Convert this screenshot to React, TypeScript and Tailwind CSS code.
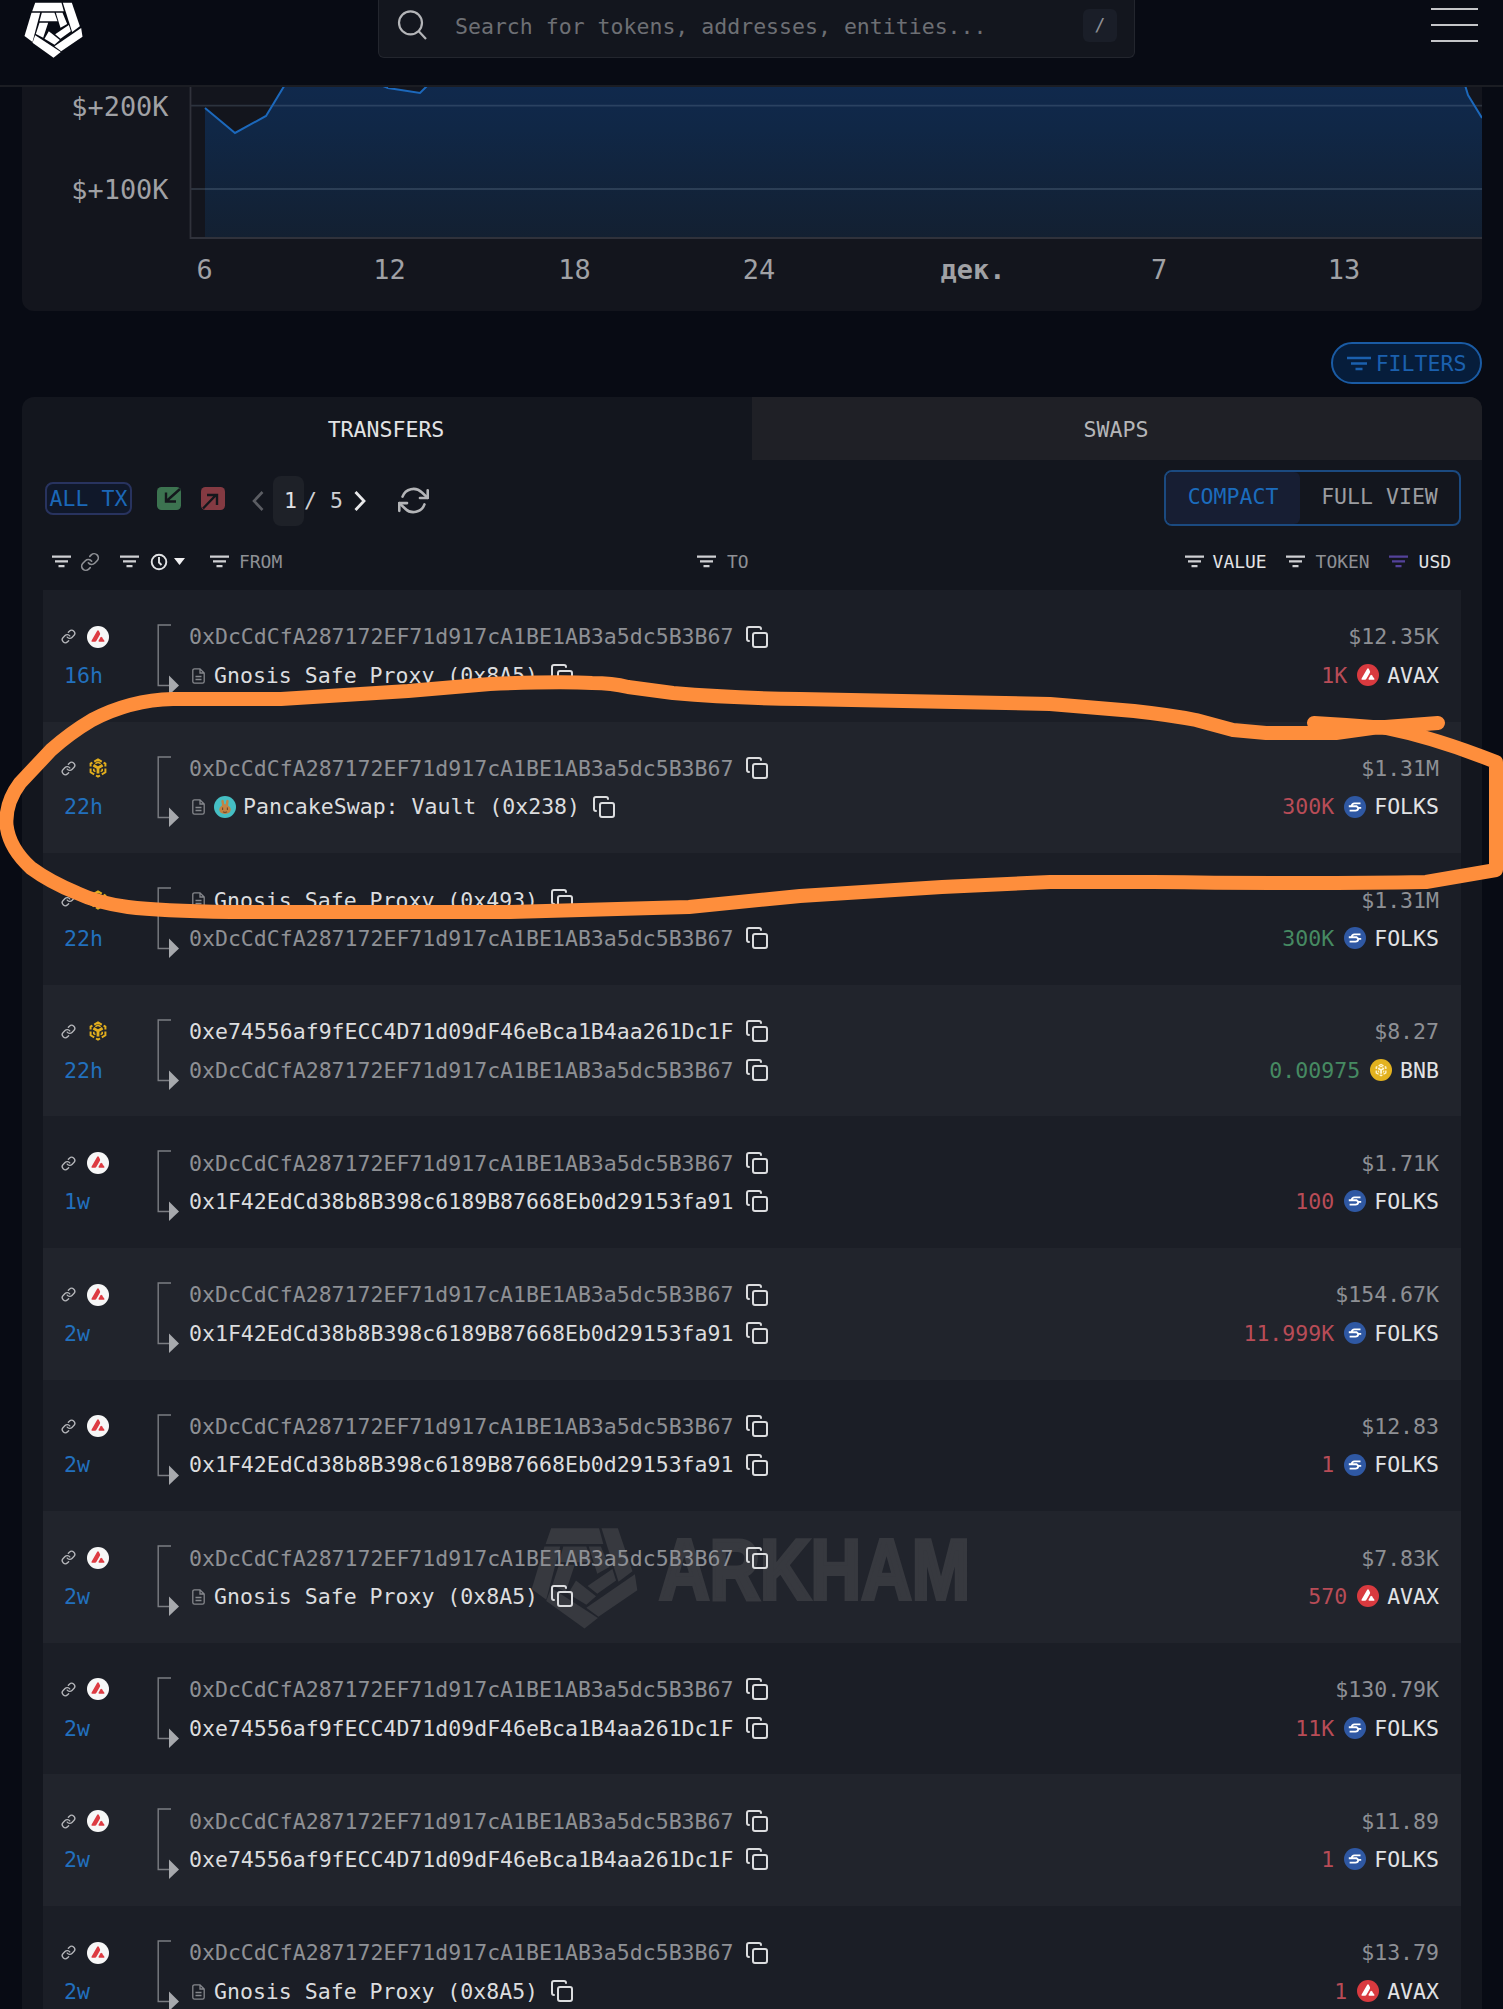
import React, { useState } from "react";
import { Copy, Link } from "lucide-react";
import { FiRefreshCw } from "react-icons/fi";

type Party = { name: string; muted?: boolean; contract?: boolean; pancake?: boolean };
type Transfer = {
  chain: "avax" | "bsc";
  age: string;
  from: Party;
  to: Party;
  usd: string;
  amount: string;
  incoming?: boolean;
  token: "AVAX" | "FOLKS" | "BNB";
};

const main: Party = { name: "0xDcCdCfA287172EF71d917cA1BE1AB3a5dc5B3B67", muted: true };
const walletE: Party = { name: "0xe74556af9fECC4D71d09dF46eBca1B4aa261Dc1F" };
const walletF: Party = { name: "0x1F42EdCd38b8B398c6189B87668Eb0d29153fa91" };
const safe: Party = { name: "Gnosis Safe Proxy (0x8A5)", contract: true };
const safeBsc: Party = { name: "Gnosis Safe Proxy (0x493)", contract: true };
const vault: Party = { name: "PancakeSwap: Vault (0x238)", contract: true, pancake: true };

const transfers: Transfer[] = [
  { chain: "avax", age: "16h", from: main, to: safe, usd: "$12.35K", amount: "1K", token: "AVAX" },
  { chain: "bsc", age: "22h", from: main, to: vault, usd: "$1.31M", amount: "300K", token: "FOLKS" },
  { chain: "bsc", age: "22h", from: safeBsc, to: main, usd: "$1.31M", amount: "300K", incoming: true, token: "FOLKS" },
  { chain: "bsc", age: "22h", from: walletE, to: main, usd: "$8.27", amount: "0.00975", incoming: true, token: "BNB" },
  { chain: "avax", age: "1w", from: main, to: walletF, usd: "$1.71K", amount: "100", token: "FOLKS" },
  { chain: "avax", age: "2w", from: main, to: walletF, usd: "$154.67K", amount: "11.999K", token: "FOLKS" },
  { chain: "avax", age: "2w", from: main, to: walletF, usd: "$12.83", amount: "1", token: "FOLKS" },
  { chain: "avax", age: "2w", from: main, to: safe, usd: "$7.83K", amount: "570", token: "AVAX" },
  { chain: "avax", age: "2w", from: main, to: walletE, usd: "$130.79K", amount: "11K", token: "FOLKS" },
  { chain: "avax", age: "2w", from: main, to: walletE, usd: "$11.89", amount: "1", token: "FOLKS" },
  { chain: "avax", age: "2w", from: main, to: safe, usd: "$13.79", amount: "1", token: "AVAX" },
];

function Logo({ className }: { className: string }) {
  return (
    <svg viewBox="72 8 176 168" className={className} fill="currentColor">
      <path d="M105 10H184L191 36H96Z" />
      <path d="M188 10H215L239 81L216 98Z" />
      <path d="M243 86L247 112L183 156L163 141Z" />
      <path d="M105 108L182 158L160 175L97 130Z" />
      <path d="M94 40H120L97 128L73 110Z" />
      <path d="M125 40H163L172 66H118Z" />
      <path d="M167 40H187L201 74L181 85Z" />
      <path d="M206 77L212 96L181 118L165 105Z" />
      <path d="M146 96L179 122L163 136L133 118Z" />
      <path d="M118 70H144L129 115L107 104Z" />
    </svg>
  );
}

function FilterIcon({ className = "text-[#cfd0d3]" }: { className?: string }) {
  return (
    <svg viewBox="0 0 19 13" className={`h-[13px] w-[19px] shrink-0 ${className}`} stroke="currentColor" strokeWidth="2.2">
      <path d="M0 1.6H19M3 6.4H16M6.5 11.2H12.5" />
    </svg>
  );
}

function AvaxMark({ bg, fg }: { bg: string; fg: string }) {
  return (
    <svg viewBox="0 0 22 22" className="h-[22px] w-[22px] shrink-0">
      <circle cx="11" cy="11" r="11" fill={bg} />
      <path d="M10.2 4.8Q11 3.6 11.8 4.8L13 7.2Q13.3 8 12.9 8.8L9.3 15Q8.9 15.7 8 15.7H5.2Q4 15.5 4.6 14.4Z" fill={fg} />
      <path d="M13.6 11.2Q14.2 10.4 14.9 11.2L17.4 14.7Q17.8 15.6 16.8 15.7H12.2Q11.1 15.6 11.6 14.6Z" fill={fg} />
    </svg>
  );
}

function BnbMark({ color }: { color: string }) {
  return (
    <g fill="none" stroke={color} strokeWidth="2">
      <path d="M7.2 4.6L11 2.5L14.8 4.6M3.6 9.5V6.7L5.4 5.7M18.4 9.5V6.7L16.6 5.7M3.6 11.5V15.3L7.2 17.4M18.4 11.5V15.3L14.8 17.4M9 18.5L11 19.7L13 18.5" />
      <path d="M6.4 8.3L11 11L15.6 8.3M11 10.5V16.6" strokeWidth="2.8" />
      <path d="M8.3 6.6L11 5.2L13.7 6.6M6.8 11.8V13.6L8.4 14.6M15.2 11.8V13.6L13.6 14.6" strokeWidth="1.6" />
    </g>
  );
}

function ChainIcon({ chain }: { chain: Transfer["chain"] }) {
  if (chain === "avax") return <AvaxMark bg="#f7f7f7" fg="#dd3b42" />;
  return (
    <svg viewBox="0 0 22 22" className="h-[22px] w-[22px] shrink-0">
      <BnbMark color="#e2ae1d" />
    </svg>
  );
}

function TokenIcon({ token }: { token: Transfer["token"] }) {
  if (token === "AVAX") return <AvaxMark bg="#d93a3f" fg="#ffffff" />;
  if (token === "BNB")
    return (
      <svg viewBox="0 0 22 22" className="h-[22px] w-[22px] shrink-0">
        <circle cx="11" cy="11" r="11" fill="#e3b21f" />
        <g transform="translate(3.9 3.9) scale(0.65)">
          <BnbMark color="#fff6d4" />
        </g>
      </svg>
    );
  return (
    <svg viewBox="0 0 22 22" className="h-[22px] w-[22px] shrink-0">
      <circle cx="11" cy="11" r="11" fill="#2f58a3" />
      <path d="M16.5 7.4H10.5Q8 7.4 7.6 10.1M5.6 14.6H11.5Q14 14.6 14.4 11.900" fill="none" stroke="#fff" strokeWidth="1.9" />
      <path d="M4.800 10.200H12.500L14.500 11.900H17.200" fill="none" stroke="#fff" strokeWidth="1.9" />
    </svg>
  );
}

function PancakeIcon() {
  return (
    <svg viewBox="0 0 22 22" className="mr-[7px] h-[22px] w-[22px] shrink-0">
      <circle cx="11" cy="11" r="11" fill="#45bfc4" />
      <path d="M8 9.5L7.3 5Q8.6 2.6 9.8 5L10.3 8.3H11.7L12.2 5Q13.4 2.6 14.7 5L14 9.5Q16.8 11 16.8 13.6Q16.6 17.8 11 17.9Q5.4 17.8 5.2 13.6Q5.2 11 8 9.5Z" fill="#c28444" />
      <path d="M8.6 11.6V14M13.4 11.6V14M9 15.8Q11 17 13 15.8" stroke="#70492c" strokeWidth="1.1" fill="none" />
    </svg>
  );
}

function PartyLine({ party }: { party: Party }) {
  return (
    <div className="flex h-[38.4px] items-center">
      {party.contract && (
        <svg viewBox="0 0 13 16" className="mr-[9px] ml-[3px] h-4 w-[13px] shrink-0" fill="none" stroke="#85878c" strokeWidth="1.3">
          <path d="M8 .8H2.6Q.8.8.8 2.6V13.4Q.8 15.2 2.6 15.2H10.4Q12.2 15.2 12.2 13.4V5ZM8 .8V5H12.2M3.5 8.5H9.5M3.5 11.5H9.5" />
        </svg>
      )}
      {party.pancake && <PancakeIcon />}
      <span className={party.muted ? "text-[#8e9095]" : "text-[#dcdddf]"}>{party.name}</span>
      <Copy className="mb-px ml-3 h-6 w-6 shrink-0 text-[#dcdddf]" strokeWidth={2} />
    </div>
  );
}

function TransferRow({ tx, striped }: { tx: Transfer; striped: boolean }) {
  return (
    <div className={`h-[131.6px] pr-[22px] pl-[18px] ${striped ? "bg-[#21242c]" : "bg-[#1b1e26]"}`}>
      <div className="relative z-10 flex pt-[28px]">
        <div className="w-[96px]">
          <div className="flex h-[38.4px] items-center pb-px">
            <Link className="h-[15px] w-[15px] text-[#b5b6ba]" strokeWidth={2.2} />
            <div className="ml-[11px]">
              <ChainIcon chain={tx.chain} />
            </div>
          </div>
          <div className="flex h-[38.4px] items-center pl-[3px] text-[#2270bd]">{tx.age}</div>
        </div>
        <svg viewBox="0 0 22 72" className="mt-[6px] h-[72px] w-[22px] shrink-0">
          <path d="M14 1H1.2V61.5H12" fill="none" stroke="#7b7d82" strokeWidth="1.4" />
          <path d="M12 51.5L22 61.5L12 71Z" fill="#a7a9ad" />
        </svg>
        <div className="ml-[10px] flex-1">
          <PartyLine party={tx.from} />
          <PartyLine party={tx.to} />
        </div>
        <div className="text-right">
          <div className="flex h-[38.4px] items-center justify-end text-[#8e9095]">{tx.usd}</div>
          <div className="flex h-[38.4px] items-center justify-end">
            <span className={tx.incoming ? "text-[#468a62]" : "text-[#b84c57]"}>{tx.amount}</span>
            <span className="mr-[8px] mb-px ml-[10px]">
              <TokenIcon token={tx.token} />
            </span>
            <span className="text-[#e2e3e5]">{tx.token}</span>
          </div>
        </div>
      </div>
    </div>
  );
}

function Chart() {
  const line = "M205 21L235 46L266 29L286 -4L300 -20H360L378 -3L388 1L420 6L430 -4L450 -30H1450L1465 -2L1468 8L1482 31";
  return (
    <svg viewBox="22 0 1460 225" className="h-[225px] w-[1460px]">
      <defs>
        <linearGradient id="area" x1="0" y1="0" x2="0" y2="1">
          <stop offset="0" stopColor="#102a50" />
          <stop offset="0.4" stopColor="#102746" />
          <stop offset="1" stopColor="#132031" />
        </linearGradient>
      </defs>
      <clipPath id="plot">
        <path d="M22 0H1482V152H22Z" />
      </clipPath>
      <g clipPath="url(#plot)">
        <path d={`${line}V152H205Z`} fill="url(#area)" />
        <path d="M191 18.7H1482M191 102H1482" stroke="#8aa0b8" strokeOpacity="0.22" strokeWidth="1.8" />
        <path d={line} fill="none" stroke="#1c68bb" strokeWidth="2" />
      </g>
      <path d="M190.5 0V151H1482" fill="none" stroke="#30323b" strokeWidth="1.8" />
      <g fill="#a0a1a5" fontSize="26.9">
        <text x="168.5" y="28.5" textAnchor="end">$+200K</text>
        <text x="168.5" y="111.5" textAnchor="end">$+100K</text>
        <g textAnchor="middle">
          <text x="204.5" y="191.5">6</text>
          <text x="389.5" y="191.5">12</text>
          <text x="574.5" y="191.5">18</text>
          <text x="759" y="191.5">24</text>
          <text x="973" y="191.5" fontWeight="bold">дек.</text>
          <text x="1159" y="191.5">7</text>
          <text x="1344" y="191.5">13</text>
        </g>
      </g>
    </svg>
  );
}

export default function App() {
  const [page, setPage] = useState<number>(1);
  const totalPage = 5;

  return (
    <div className="relative h-[2009px] w-[1503px] overflow-hidden bg-[#080b14] font-['DejaVu_Sans_Mono',monospace] text-[21.54px] leading-none">
      <header className="flex h-[87px] items-start border-b-2 border-[#1b1d23] pr-[25px] pl-6">
        <Logo className="mt-[2px] h-[56px] w-[59px] text-white" />
        <div className="ml-[295px] flex h-[58px] w-[757px] items-center rounded-b-md border border-t-0 border-[#23262e] bg-[#13161e] pr-[17px] pb-[7px] pl-[18px]">
          <svg viewBox="0 0 30 30" className="h-[30px] w-[30px]" fill="none" stroke="#b4b5b8" strokeWidth="2.2">
            <circle cx="13.5" cy="12.8" r="11.5" />
            <path d="M21.5 21L29 29" />
          </svg>
          <span className="mt-[3px] ml-[28px] flex-1 text-[#6d6f74]">Search for tokens, addresses, entities...</span>
          <span className="flex h-[33px] w-[34px] items-center justify-center rounded-md bg-[#1a1e28] text-[18px] text-[#8e9095]">/</span>
        </div>
        <div className="mt-[8px] ml-auto flex w-[47px] flex-col gap-[13.8px]">
          <div className="h-[2px] bg-[#c4c5c8]" />
          <div className="h-[2px] bg-[#c4c5c8]" />
          <div className="h-[2px] bg-[#c4c5c8]" />
        </div>
      </header>

      <section className="mx-[22px] h-[224px] w-[1460px] overflow-hidden rounded-b-xl bg-[#13151d]">
        <Chart />
      </section>

      <div className="flex h-[86px] justify-end pt-[31px] pr-[21px]">
        <button className="flex h-[42px] w-[151px] items-center justify-center rounded-full border-2 border-[#1a5ba4] bg-[#061d3b] text-[#1b60ae]">
          <svg viewBox="0 0 24 15" className="mr-[5px] h-[15px] w-6" stroke="currentColor" strokeWidth="2.4">
            <path d="M0 2H24M4 7.5H20M8.5 13H15.5" />
          </svg>
          <span className="mt-[2px]">FILTERS</span>
        </button>
      </div>

      <section className="mx-[22px] w-[1460px] overflow-hidden rounded-t-xl bg-[#13161e]">
        <div className="flex h-[63px]">
          <div className="flex flex-1 items-center justify-center pt-[2px] pr-[2px] text-[#e2e3e5]">TRANSFERS</div>
          <div className="flex flex-1 items-center justify-center bg-[#1f2026] pt-[2px] pr-[2px] text-[#b4b5b8]">SWAPS</div>
        </div>

        <div className="flex h-[76px] items-center pr-[21px] pl-[23px]">
          <div className="flex h-[33px] w-[87px] items-center justify-center rounded-lg border-2 border-[#28335f] bg-[#10182a] text-[#1b68b8]">
            <span className="mt-px whitespace-nowrap">ALL TX</span>
          </div>
          <svg viewBox="0 0 24 23" className="ml-[25px] h-[23px] w-6">
            <rect width="24" height="23" rx="4.5" fill="#3c7350" />
            <path d="M23 2L9 14.5M9 5.5V14.5H19" fill="none" stroke="#14171c" strokeWidth="2.4" />
          </svg>
          <svg viewBox="0 0 24 23" className="ml-5 h-[23px] w-6">
            <rect width="24" height="23" rx="4.5" fill="#843a42" />
            <path d="M2 21.5L15.5 7.5M6 8H16V18" fill="none" stroke="#14171c" strokeWidth="2.4" />
          </svg>
          <button disabled={page === 1} onClick={() => setPage((prev) => prev - 1)} className="ml-[27px]">
            <svg viewBox="0 0 12 20" className="mt-[5px] h-5 w-3" fill="none" stroke="#5b5d63" strokeWidth="2.6">
              <path d="M10.5 1L2 10L10.5 19" />
            </svg>
          </button>
          <span className="mt-[5px] ml-[9px] flex h-[50px] w-[31px] items-center justify-center rounded-lg bg-[#1e2128] pl-[4px] text-[#e2e3e5]">{page}</span>
          <span className="mt-[6px] text-[#cfd0d3]">/</span>
          <span className="mt-[6px] ml-[13px] text-[#cfd0d3]">{totalPage}</span>
          <button disabled={page === totalPage} onClick={() => setPage((prev) => prev + 1)} className="ml-[11px]">
            <svg viewBox="0 0 12 20" className="mt-[5px] h-5 w-3" fill="none" stroke="#e8e8ea" strokeWidth="2.8">
              <path d="M1.5 1L10 10L1.5 19" />
            </svg>
          </button>
          <FiRefreshCw className="mt-[5px] ml-[32px] h-[31px] w-[31px] text-[#b4b5b8]" />
          <div className="ml-auto flex h-[56px] w-[297px] overflow-hidden rounded-lg border-2 border-[#1b4a80]">
            <div className="flex w-[134px] items-center justify-center rounded-r-md bg-[#171e33] pb-[2px] text-[#1b6cbd]">COMPACT</div>
            <div className="flex flex-1 items-center justify-center pb-[2px] text-[#9b9da1]">FULL VIEW</div>
          </div>
        </div>

        <div className="flex h-[54px] items-center pr-[31px] pb-[3px] pl-[30px] text-[17.95px] text-[#8e9095]">
          <FilterIcon />
          <Link className="ml-[9px] h-5 w-5" strokeWidth={2} />
          <FilterIcon className="ml-[20px] text-[#cfd0d3]" />
          <svg viewBox="0 0 18 18" className="ml-[11px] h-[18px] w-[18px]" fill="none" stroke="#e2e3e5" strokeWidth="1.9">
            <circle cx="9" cy="9" r="7.3" />
            <path d="M9 4V9.5L11.5 12" />
          </svg>
          <svg viewBox="0 0 11 7" className="ml-[6px] h-[7px] w-[11px]" fill="#f0f0f2">
            <path d="M0 0H11L5.5 7Z" />
          </svg>
          <FilterIcon className="ml-[25px] text-[#cfd0d3]" />
          <span className="ml-[10px] w-[458px]">FROM</span>
          <FilterIcon />
          <span className="ml-[11px]">TO</span>
          <FilterIcon className="ml-auto text-[#cfd0d3]" />
          <span className="ml-[9px] text-[#e2e3e5]">VALUE</span>
          <FilterIcon className="ml-[19px] text-[#cfd0d3]" />
          <span className="ml-[11px]">TOKEN</span>
          <FilterIcon className="ml-[19px] text-[#54429a]" />
          <span className="ml-[11px] text-[#e2e3e5]">USD</span>
        </div>

        <div className="relative mx-[21px]">
          {transfers.map((tx, index) => (
            <TransferRow key={index} tx={tx} striped={index % 2 === 1} />
          ))}
          <div className="absolute top-[937px] left-[488px] flex text-[#37393f]">
            <Logo className="h-[102px] w-[107px]" />
            <svg viewBox="0 0 330 110" className="ml-[18px] h-[110px] w-[330px]">
              <text x="3" y="71.5" textLength="311" lengthAdjust="spacingAndGlyphs" fontSize="85" fontWeight="bold" fontFamily="Liberation Sans, sans-serif" fill="currentColor" stroke="currentColor" strokeWidth="4">
                ARKHAM
              </text>
            </svg>
          </div>
        </div>
      </section>

      {/* hand-drawn marker around the vault transfer */}
      <svg viewBox="0 0 1503 2009" className="pointer-events-none absolute inset-0 z-20 h-[2009px] w-[1503px]" fill="none" stroke="#fe8e3c" strokeWidth="14" strokeLinecap="round" strokeLinejoin="round">
        <path d="M1314 723Q1350 725 1386 728Q1436 738 1496 762V870L1426 882Q1316 884 1153 882L1050 882L942 887L800 896L689 907L510 912H230Q160 911 128 907Q98 903 77 893Q50 882 31 868Q9 848 6.5 825Q5 803 20 783L51 750Q70 733 92 720Q130 700 173 699H281L408 691L490 684Q560 681 592 683Q612 683 628 687L673 693Q730 698 800 699L1050 704L1134 711Q1170 715 1196 720L1233 730L1266 733H1336L1372 728L1438 723" />
      </svg>
    </div>
  );
}
